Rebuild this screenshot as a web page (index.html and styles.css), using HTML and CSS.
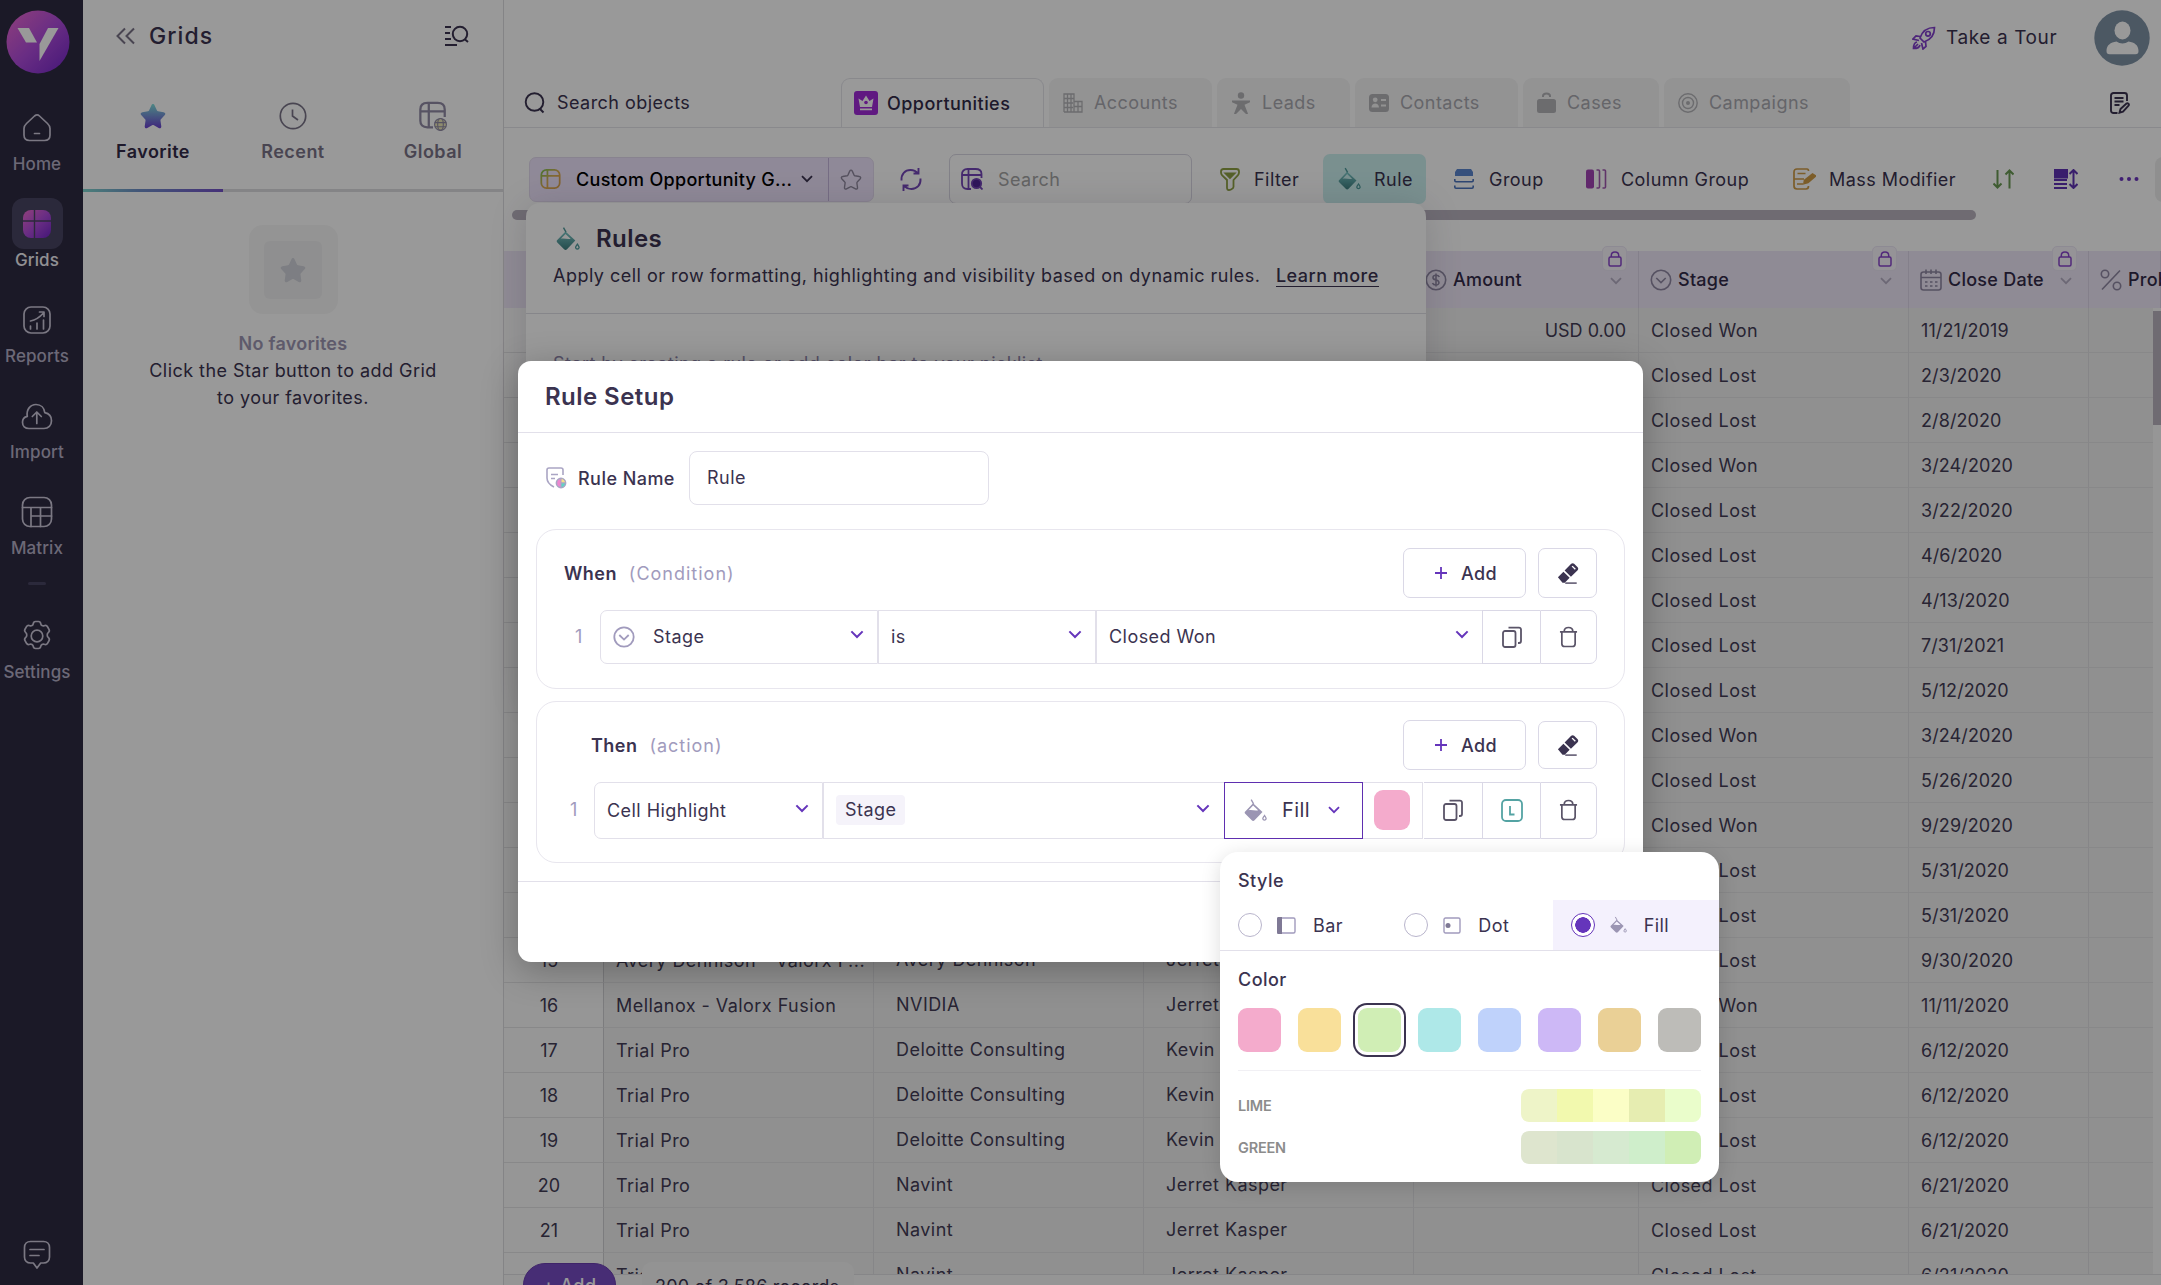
FILE: index.html
```html
<!DOCTYPE html>
<html lang="en">
<head>
    <meta charset="UTF-8">
    <meta name="viewport" content="width=device-width, initial-scale=1.0">
    <title>Grids - Rule Setup</title>
    <link rel="stylesheet" href="styles.css">
</head>
<body>
    <!-- shared icons -->
    <svg class="defs" width="0" height="0">
        <defs>
            <linearGradient id="g-brand" x1="0" y1="0" x2="1" y2="1"><stop offset="0" stop-color="#f06ad0"/><stop offset=".5" stop-color="#b04cdc"/><stop offset="1" stop-color="#7226c8"/></linearGradient>
            <linearGradient id="g-star" x1="0" y1="0" x2="0" y2="1"><stop offset="0" stop-color="#7fe0dc"/><stop offset="1" stop-color="#6a3fd0"/></linearGradient>
            <linearGradient id="g-teal" x1="0" y1="0" x2="0" y2="1"><stop offset="0" stop-color="#7cc8c8"/><stop offset="1" stop-color="#3d7f80"/></linearGradient>
            <linearGradient id="g-grid" x1="0" y1="0" x2="1" y2="1"><stop offset="0" stop-color="#7fc352"/><stop offset=".5" stop-color="#dcae58"/><stop offset="1" stop-color="#d9a04c"/></linearGradient>
        </defs>
        <symbol id="chevron" viewBox="0 0 12 8"><path d="M1 1.2l5 5 5-5" fill="none" stroke="currentColor" stroke-width="1.8"/></symbol>
        <symbol id="star" viewBox="0 0 24 24"><path d="M12 1.8c.7 0 1.1.5 1.4 1.1l2 4.3c.2.4.5.6.9.7l4.8.8c1.400.2 1.900 1.500 1 2.500l-3.300 3.500c-.3.3-.4.7-.4 1.100l.7 4.900c.2 1.300-1 2.200-2.200 1.500l-4.100-2.200c-.5-.3-1.100-.3-1.600 0l-4.100 2.200c-1.200.7-2.400-.2-2.200-1.500l.7-4.900c.1-.4-.1-.8-.4-1.100l-3.300-3.500c-.9-1-.4-2.300 1-2.500l4.800-.8c.4-.1.7-.3.9-.7l2-4.300c.3-.6.700-1.100 1.400-1.100z"/></symbol>
        <symbol id="bucket" viewBox="0 0 24 24"><path d="M.8 13.500L9.500 4.500l9.800 9-8.300 8.800c-.9.9-2 .9-2.900 0L1.300 15.500c-.6-.6-.8-1.300-.5-2z"/><path class="hollow" d="M4.800 11.800l4.700-4.900 5.200 4.800c-3.200 1.200-6.400-1-9.900.1z"/><path d="M7.500.6l2.500 4.500" fill="none" stroke="currentColor" stroke-width="1.400"/><path d="M21.400 17.200c1 1.500 1.700 2.300 1.700 3.400a1.800 1.800 0 01-3.500 0c0-1.100.8-1.900 1.800-3.400z" fill="none" stroke="currentColor" stroke-width="1.300"/></symbol>
        <symbol id="copy" viewBox="0 0 20 22"><rect x="1" y="5" width="12.500" height="16" rx="2"/><path d="M6.500 1.600h10.500a2 2 0 012 2v11.400a2 2 0 01-2 2h-1"/></symbol>
        <symbol id="trash" viewBox="0 0 20 22"><path d="M1 5.500h18M5.500 5c0-2.500 2-4 4.500-4s4.500 1.500 4.500 4M3 6v12a3 3 0 003 3h8a3 3 0 003-3V6"/></symbol>
        <symbol id="eraser" viewBox="0 0 24 24"><path d="M1 16.500l6-6 6.800 6.800-5.300 5.200H6z"/><path d="M8.300 9.200L15.500 2c1-1 2.300-1 3.200 0l3.800 3.800c.9.9.9 2.200 0 3.200l-7.300 7z"/><path d="M16.500 4.500l3.500 3.500" stroke="#fff" stroke-width="1.500"/><path d="M9 23h12.500" stroke="currentColor" stroke-width="1.400"/></symbol>
        <symbol id="lock" viewBox="0 0 14 16"><rect x="1" y="6" width="12" height="9" rx="1.500"/><path d="M3.300 6V4.500C3.300 2.400 4.800 1 7 1s3.700 1.400 3.700 3.500V6"/></symbol>
        <symbol id="picklist" viewBox="0 0 22 22"><circle cx="11" cy="11" r="9.700"/><path d="M6.300 9l4.700 4.600L15.700 9"/></symbol>
        <symbol id="grid" viewBox="0 0 24 24"><rect x="1.500" y="1.500" width="21" height="21" rx="6"/><path d="M8.500 1.500v21M1.500 8.500h21"/></symbol>
    </svg>

    <div class="app">
        <nav class="sidebar">
            <svg class="logo" width="64" height="64" viewBox="0 0 64 64"><circle cx="32" cy="32" r="31.500" fill="url(#g-brand)"/><path fill="#fff" d="M11.500 18h11.500l8 14.500h-11z"/><path fill="#fff" d="M42 18h10.500L33.500 51V34z"/></svg>
            <a class="nav-item"><span class="nav-icon"><svg width="30" height="30" viewBox="0 0 30 30"><path d="M4.500 10.500l8-7.500c1.700-1.400 3.500-1.400 5 0l8 7.500c1.500 1.400 2.500 3 2.500 5V22c0 3.600-2 5.500-5.500 5.500h-15C4 27.500 2 25.600 2 22v-6.500c0-2 1-3.600 2.500-5z"/><path d="M12.500 20.500h5"/></svg></span>Home</a>
            <a class="nav-item active"><span class="nav-icon"><svg width="28" height="28" viewBox="0 0 28 28"><rect width="28" height="28" rx="8" fill="url(#g-brand)" stroke="none"/><path d="M11.500 0v28M0 11h28" stroke="#494563" stroke-width="1.400"/></svg></span>Grids</a>
            <a class="nav-item"><span class="nav-icon"><svg width="30" height="30" viewBox="0 0 30 30"><rect x="2" y="2" width="26" height="26" rx="7"/><path d="M8.500 24v-3M15 24v-6M21.500 24V15M8.500 16c5-1 9-3.500 13-8M17.500 7h4.500v4.500"/></svg></span>Reports</a>
            <a class="nav-item"><span class="nav-icon"><svg width="32" height="30" viewBox="0 0 32 30"><path d="M8 27.500c-4 0-6.500-2.500-6.500-6.200 0-3 2-5.300 4.800-5.900C5 8.500 9.500 3.500 15 3.500c5 0 8.300 3.500 8.800 8.200 4 .8 6.700 4 6.700 8 0 4.600-3.200 7.800-7.500 7.800zM15.800 22.500V11.300M11.300 15.500l4.500-4.500 4.500 4.500"/></svg></span>Import</a>
            <a class="nav-item"><span class="nav-icon"><svg width="32" height="32" viewBox="0 0 32 32"><rect x="1.500" y="1.500" width="29" height="29" rx="7.500"/><path d="M1.500 11.500h29M10 11.500v19M19.500 11.500v19M10 20h20.500"/></svg></span>Matrix</a>
            <span class="nav-divider"></span>
            <a class="nav-item"><span class="nav-icon"><svg width="32" height="32" viewBox="0 0 32 32"><circle cx="16" cy="16" r="5.800"/><path d="M12.200 3.800c.2-1.500 1-2.300 2.300-2.300h3c1.300 0 2.100.8 2.300 2.300.3 1.600 1.800 2.500 3.300 2 1.500-.6 2.700-.3 3.400.9l1.500 2.600c.7 1.200.4 2.300-.8 3.300-1.300 1-1.300 3.800 0 4.800 1.200 1 1.500 2.100.8 3.300l-1.500 2.600c-.7 1.200-1.900 1.500-3.400.9-1.500-.5-3 .4-3.300 2-.2 1.500-1 2.300-2.300 2.300h-3c-1.300 0-2.100-.8-2.300-2.300-.3-1.600-1.800-2.500-3.300-2-1.500.6-2.700.3-3.400-.9L4 20.700c-.7-1.200-.4-2.300.8-3.300 1.300-1 1.300-3.800 0-4.800-1.200-1-1.500-2.100-.8-3.300l1.500-2.600c.7-1.200 1.900-1.500 3.400-.9 1.500.5 3-.4 3.300-2z"/></svg></span>Settings</a>
            <svg class="nav-chat" width="28" height="30" viewBox="0 0 28 30"><path d="M7.500 1.500h13c3.500 0 6 2.300 6 6v9.500c0 3.700-2.500 6-6 6h-2.800L14 28l-3.700-5H7.500c-3.500 0-6-2.300-6-6V7.500c0-3.700 2.500-6 6-6zM7 9.500h14M7 15.500h9"/></svg>
        </nav>

        <aside class="panel">
            <div class="panel-head">
                <svg class="muted" width="19" height="18" viewBox="0 0 19 18"><path d="M9 1.500L1.500 9 9 16.500M18 1.500L10.500 9l7.500 7.500"/></svg>
                <h2>Grids</h2>
                <svg class="find" width="24" height="22" viewBox="0 0 24 22"><path d="M0 2h6M0 8h5M0 14h6M0 20h12"/><circle cx="15" cy="9" r="7.200"/><path d="M19.500 14l3.500 3"/></svg>
            </div>
            <div class="panel-tabs">
                <div class="panel-tab active"><svg width="28" height="30" viewBox="0 0 24 24" fill="url(#g-star)"><use href="#star"/></svg>Favorite</div>
                <div class="panel-tab"><svg class="line" width="28" height="30" viewBox="0 0 28 28"><circle cx="14" cy="14" r="12.700"/><path d="M13.500 7.500V14l5.500 4"/></svg>Recent</div>
                <div class="panel-tab"><svg class="line thick" width="30" height="32" viewBox="0 0 30 32"><path d="M15 28H9c-5 0-7.500-2.500-7.500-7V9C1.500 4.500 4 2 9 2h11c5 0 7.500 2.500 7.500 7v8M10.500 2v26M1.500 11h26"/><g stroke-width="1.200"><circle cx="23" cy="25" r="6.300" fill="#ece8b8"/><ellipse cx="23" cy="25" rx="3" ry="6.300"/><path d="M17 23h12M17 27.500h12"/></g></svg>Global</div>
            </div>
            <div class="empty">
                <div class="empty-icon"><div><svg width="28" height="30" viewBox="0 0 24 24" fill="#d0d2da"><use href="#star"/></svg></div></div>
                <strong>No favorites</strong>
                <p>Click the Star button to add Grid<br>to your favorites.</p>
            </div>
        </aside>

        <main class="main">
            <header class="topbar">
                <svg class="rocket" width="24" height="24" viewBox="0 0 24 24"><path d="M8 12C10 6 15 1.500 22.500 1.500 22.500 9 18 14 12 16zM8.500 10.500L4 10 1 13l6 1.500M13.500 15.500l.5 5-3 2.500-1.500-6"/><circle cx="16" cy="7.800" r="2.300"/><path d="M5 16c-2.500.5-3.500 2.500-3.500 6.500 4 0 6-1 6.500-3.500M2 22l4-4"/></svg>
                <span>Take a Tour</span>
                <svg class="avatar" width="56" height="56" viewBox="0 0 56 56"><circle cx="28" cy="28" r="27.700" fill="#7f93a6"/><ellipse cx="28.500" cy="20.500" rx="8" ry="9" fill="#fff"/><path fill="#fff" d="M12.500 41c0-6 4-8.500 10-9.500 3.500 2.500 8.500 2.500 12 0 6 1 10 3.500 10 9.500 0 2.300-1 3.300-3 3.300h-26c-2 0-3-1-3-3.300z"/></svg>
            </header>

            <div class="object-tabs">
                <div class="object-search"><svg width="21" height="22" viewBox="0 0 21 22"><circle cx="10.500" cy="10" r="8.800"/><path d="M15.500 16.500l4 4"/></svg>Search objects</div>
                <div class="object-tab opportunities active"><svg width="24" height="24" viewBox="0 0 24 24"><rect width="24" height="24" rx="3" fill="#a02bd8"/><path d="M4.500 7.500L8.500 10 12 4.500l3.500 5.500 4-2.500L18 16H6zM6 17.500h12v1.800H6z" fill="#fff"/><circle cx="12" cy="11.500" r="1.800" fill="#a02bd8"/></svg>Opportunities</div>
                <div class="object-tab accounts"><svg width="20" height="20" viewBox="0 0 20 20"><g fill="none" stroke="currentColor" stroke-width="1.300"><path d="M1 19V1h10v7M1 19h10M1 5.500h10M1 10h9M1 14.500h9M4.500 1v18M8 1v18M11 8.500h8V19h-8zM11 13.500h8M15 8.500V19"/></g></svg>Accounts</div>
                <div class="object-tab leads"><svg width="20" height="22" viewBox="0 0 20 22"><circle cx="10" cy="3.500" r="3.200"/><path d="M1 8.500h18v1.800l-5.500 2.500 3.500 9-1.500.7L10 17l-5.500 5.500L3 21.800l3.500-9L1 10.300z"/></svg>Leads</div>
                <div class="object-tab contacts"><svg width="20" height="18" viewBox="0 0 20 18"><rect width="20" height="18" rx="3.500"/><g fill="#f3f3f3"><circle cx="6.200" cy="5.800" r="2.400"/><path d="M2.500 13.500c0-5.500 7.500-5.500 7.500 0zM12 5h5v2h-5zM12 10.500h5v2h-5z"/></g></svg>Contacts</div>
                <div class="object-tab cases"><svg width="19" height="21" viewBox="0 0 19 21"><rect y="7" width="19" height="14" rx="2.500"/><path d="M6 5V4c0-1.500 1.200-2.500 3.500-2.500S13 2.500 13 4v1" fill="none" stroke="currentColor" stroke-width="2"/></svg>Cases</div>
                <div class="object-tab campaigns"><svg width="20" height="20" viewBox="0 0 20 20"><g fill="none" stroke="currentColor" stroke-width="1.400"><circle cx="10" cy="10" r="9.200"/><circle cx="10" cy="10" r="5.500"/></g><circle cx="10" cy="10" r="2"/></svg>Campaigns</div>
                <svg class="note" width="20" height="22" viewBox="0 0 20 22"><path d="M7.500 21H3.500C2 21 1 20 1 18.500V3.500C1 2 2 1 3.500 1h11C16 1 17 2 17 3.500V9M4.500 6h9M4.500 9.500h9M4.500 13h5M10.500 17l6-5.500c1.200-.8 3.200.7 2 2.200l-5.500 6-3.500 1z"/></svg>
            </div>

            <div class="toolbar">
                <div class="grid-picker">
                    <svg width="21" height="22" viewBox="0 0 24 24" fill="none" stroke="url(#g-grid)" stroke-width="2"><use href="#grid"/></svg>
                    <span class="picker-name">Custom Opportunity G...</span>
                    <svg width="12" height="8"><use href="#chevron"/></svg>
                    <span class="picker-star"><svg width="22" height="23" viewBox="0 0 24 24" fill="none" stroke="#8f889e" stroke-width="1.500"><use href="#star"/></svg></span>
                </div>
                <svg class="refresh" width="22" height="23" viewBox="0 0 22 23"><path d="M1.500 12.500C1 6 5 2 10.500 2c3 0 5.500 1 7.500 3.500M18.500 0v5.500h-5M20.500 10.500C21 17 17 21 11.500 21c-3 0-5.500-1-7.500-3.500M3.500 23v-5.500h5"/></svg>
                <div class="grid-search"><svg width="22" height="22" viewBox="0 0 22 22" fill="none" stroke="#7446b8" stroke-width="1.800"><path d="M10 21H6.500C3 21 1 19 1 15.500v-9C1 3 3 1 6.500 1h8C18.500 1 20.500 3 20.500 6v4M1 7h19.500M7.500 1v20"/><circle cx="15.500" cy="15.500" r="4.700" fill="#4f2496"/><path d="M19 19l2.500 2.500"/></svg>Search</div>
                <div class="tool filter"><svg width="20" height="23" viewBox="0 0 20 23" fill="none" stroke="#8ea044" stroke-width="1.800"><path d="M3.500 1h13C18.200 1 19 2 19 3.500v1c0 1-.5 2-1.200 2.800L13.500 12v7c0 1.800-4.500 4-6 2.500-.6-.6-.5-1.500-.5-2.500v-7L2.200 7.300C1.500 6.500 1 5.500 1 4.500v-1C1 2 1.800 1 3.500 1z"/><path d="M5.500 5.500h9L10 10z" fill="#8ea044"/></svg>Filter</div>
                <div class="tool rule"><svg class="teal" width="23" height="24"><use href="#bucket"/></svg>Rule</div>
                <div class="tool group"><svg width="20" height="22" viewBox="0 0 20 22"><path d="M3 1h14l2 3v4H1V4z" fill="#5b86cf"/><path d="M.8 11v1.500c0 .8.500 1.200 1.200 1.200h16c.7 0 1.200-.4 1.200-1.200V11M.8 17.500V19c0 .8.500 1.200 1.200 1.200h16c.7 0 1.200-.4 1.200-1.200v-1.500" fill="none" stroke="#4b74bd" stroke-width="1.600"/></svg>Group</div>
                <div class="tool column"><svg width="21" height="20" viewBox="0 0 21 20"><rect width="8" height="19" y=".5" rx="2" fill="#a244b4"/><path d="M10.500 1h2c.8 0 1 .4 1 1v16c0 .6-.2 1-1 1h-2M16.500 1h2c.8 0 1 .4 1 1v16c0 .6-.2 1-1 1h-2" fill="none" stroke="#a058b0" stroke-width="1.600"/></svg>Column Group</div>
                <div class="tool mass"><svg width="23" height="22" viewBox="0 0 23 22" fill="none" stroke="#cf9b45" stroke-width="1.700"><path d="M14 1H4C2 1 1 2 1 4v14c0 2 1 3 3 3h9c1.500 0 2.500-1 2.500-3M14 1c1 0 1.500.7 1.500 2M4.500 5.500h8M1 11h10M4 16h6"/><path d="M11.500 12.500L19.500 6l3 2-7.500 6.500-4 1z" fill="#cf9b45"/></svg>Mass Modifier</div>
                <svg class="sort" width="21" height="20" viewBox="0 0 21 20"><path d="M4.500 1v18M.5 14.500l4 4 4-4M16.500 19.500V1.500M12.500 5.500l4-4 4 4"/></svg>
                <svg class="height" width="24" height="20" viewBox="0 0 24 20"><path d="M0 1h13v7.500H0z" fill="#5f33b4"/><path d="M0 11h13M0 15h13M0 19h13M19.500 1.500v17M15.500 5l4-4 4 4M15.500 15l4 4 4-4"/></svg>
                <svg class="dots" width="20" height="6" viewBox="0 0 20 6"><circle cx="2.500" cy="3" r="2"/><circle cx="10" cy="3" r="2"/><circle cx="17.500" cy="3" r="2"/></svg>
                <span class="cut-button"></span>
            </div>
            <div class="h-scroll"><span></span></div>

            <div class="table">
                <div class="table-head">
                    <div class="th"></div>
                    <div class="th"></div>
                    <div class="th"></div>
                    <div class="th"></div>
                    <div class="th"><svg class="th-icon" width="22" height="22" viewBox="0 0 22 22"><circle cx="11" cy="11" r="9.700"/><path d="M14.300 8c-.5-1.200-1.700-1.800-3.300-1.800-3.800 0-4 4-.5 4.600 4.500.6 4.500 5.200.5 5.200-1.800 0-3-.7-3.500-2M11 4.500v13"/></svg>Amount<span class="lock"><svg width="14" height="16"><use href="#lock"/></svg></span><svg class="th-more" width="12" height="8"><use href="#chevron"/></svg></div>
                    <div class="th"><svg class="th-icon" width="22" height="22"><use href="#picklist"/></svg>Stage<span class="lock"><svg width="14" height="16"><use href="#lock"/></svg></span><svg class="th-more" width="12" height="8"><use href="#chevron"/></svg></div>
                    <div class="th"><svg class="th-icon" width="22" height="22" viewBox="0 0 22 22"><rect x="1" y="3" width="20" height="18" rx="2.500"/><path d="M1 8.500h20M6 .5V5M11 .5V5M16 .5V5"/><path d="M5 13h12.500M5 17h12.500" stroke-dasharray="2.500 2.500"/></svg>Close Date<span class="lock"><svg width="14" height="16"><use href="#lock"/></svg></span><svg class="th-more" width="12" height="8"><use href="#chevron"/></svg></div>
                    <div class="th"><svg class="th-icon" width="22" height="22" viewBox="0 0 22 22"><circle cx="5" cy="5" r="3.700"/><circle cx="17" cy="17" r="3.700"/><path d="M20 1.500L2 20.500"/></svg>Probability</div>
                </div>
                <div class="table-body" id="table-body"></div>
                <div class="v-scroll"><span></span></div>
            </div>

            <footer class="records">
                <button class="add-record">+ Add</button>
                <span class="record-count">200 of 3,586 records</span>
            </footer>
        </main>
    </div>

    <section class="rules-panel">
        <div class="rules-head">
            <h3><svg class="teal" width="24" height="24"><use href="#bucket"/></svg>Rules</h3>
            <p>Apply cell or row formatting, highlighting and visibility based on dynamic rules. <a>Learn more</a></p>
        </div>
        <p class="rules-hint">Start by creating a rule or add color bar to your picklist.</p>
    </section>

    <div class="overlay"></div>

    <section class="modal">
        <h3 class="modal-title">Rule Setup</h3>
        <div class="modal-body">
            <div class="rule-name">
                <svg width="21" height="22" viewBox="0 0 21 22" fill="none" stroke="#aaa5c4" stroke-width="1.600"><path d="M8 20C4 18 1 15.500 1 11V3c0-1.300.7-2 2-2h12c1.300 0 2 .7 2 2v5M5 7.500h7M5 11.500h4"/><circle cx="15" cy="16" r="4.600" fill="#ee86cf"/><path d="M15 11.500a4.500 4.500 0 014.500 4.500H15z" fill="#f5e08a" stroke-width="1"/><path d="M15 16h4.500a4.500 4.500 0 01-4.500 4.500z" fill="#5fd3c4" stroke-width="1"/></svg>
                <label>Rule Name</label>
                <div class="text-input">Rule</div>
            </div>

            <div class="block">
                <div class="block-head">
                    <strong>When</strong><em>(Condition)</em>
                    <button class="add-btn"><svg width="12" height="12" viewBox="0 0 12 12"><path d="M6 0v12M0 6h12"/></svg>Add</button>
                    <button class="icon-btn"><svg width="22" height="24"><use href="#eraser"/></svg></button>
                </div>
                <div class="block-row when-row">
                    <span class="row-no">1</span>
                    <div class="cell field"><svg class="pick" width="22" height="22"><use href="#picklist"/></svg>Stage<svg class="chev" width="14" height="9"><use href="#chevron"/></svg></div>
                    <div class="cell operator">is<svg class="chev" width="14" height="9"><use href="#chevron"/></svg></div>
                    <div class="cell value">Closed Won<svg class="chev" width="14" height="9"><use href="#chevron"/></svg></div>
                    <div class="cell act"><svg width="20" height="22"><use href="#copy"/></svg></div>
                    <div class="cell act last"><svg width="19" height="22"><use href="#trash"/></svg></div>
                </div>
            </div>

            <div class="block then">
                <div class="block-head">
                    <strong>Then</strong><em>(action)</em>
                    <button class="add-btn"><svg width="12" height="12" viewBox="0 0 12 12"><path d="M6 0v12M0 6h12"/></svg>Add</button>
                    <button class="icon-btn small"><svg width="22" height="24"><use href="#eraser"/></svg></button>
                </div>
                <div class="block-row then-row">
                    <span class="row-no">1</span>
                    <div class="cell action">Cell Highlight<svg class="chev" width="14" height="9"><use href="#chevron"/></svg></div>
                    <div class="cell target"><span class="chip">Stage</span><svg class="chev" width="14" height="9"><use href="#chevron"/></svg></div>
                    <div class="cell fill"><svg class="grey-bucket" width="23" height="25"><use href="#bucket"/></svg>Fill<svg class="fill-chev" width="12" height="8"><use href="#chevron"/></svg></div>
                    <div class="cell swatch-cell"><span></span></div>
                    <div class="cell act"><svg width="20" height="22"><use href="#copy"/></svg></div>
                    <div class="cell act"><svg class="legend" width="22" height="23" viewBox="0 0 22 23"><rect x="1" y="1" width="20" height="21" rx="4"/><path d="M9 7v8.500h4.500"/></svg></div>
                    <div class="cell act last"><svg width="19" height="22"><use href="#trash"/></svg></div>
                </div>
            </div>
        </div>
        <div class="modal-foot"></div>
    </section>

    <section class="popover">
        <h4>Style</h4>
        <div class="styles">
            <label><i></i><svg width="19" height="17" viewBox="0 0 19 17"><rect x="1" y="1" width="17" height="15" rx="1.500"/><path d="M0 1.500C0 .5.500 0 1.500 0H5v17H1.500C.5 17 0 16.500 0 15.500z" fill="#7f7995" stroke="none"/></svg>Bar</label>
            <label><i></i><svg width="18" height="17" viewBox="0 0 18 17"><rect x="1" y="1" width="16" height="15" rx="1.500"/><circle cx="5" cy="8.500" r="2.500" fill="#7f7995" stroke="none"/></svg>Dot</label>
            <label class="checked"><i></i><svg class="grey-bucket" width="17" height="18"><use href="#bucket"/></svg>Fill</label>
        </div>
        <h4>Color</h4>
        <div class="swatches">
            <span class="pink"></span><span class="yellow"></span><span class="green selected"></span><span class="aqua"></span><span class="blue"></span><span class="violet"></span><span class="sand"></span><span class="grey"></span>
        </div>
        <div class="shade"><b>LIME</b><div class="ramp lime"><i></i><i></i><i></i><i></i><i></i></div></div>
        <div class="shade"><b>GREEN</b><div class="ramp leaf"><i></i><i></i><i></i><i></i><i></i></div></div>
    </section>

    <script>
        // name, account, owner, amount, stage, close date
        const rows = [
            ['', '', '', 'USD 0.00', 'Closed Won', '11/21/2019'],
            ['', '', '', '', 'Closed Lost', '2/3/2020'],
            ['', '', '', '', 'Closed Lost', '2/8/2020'],
            ['', '', '', '', 'Closed Won', '3/24/2020'],
            ['', '', '', '', 'Closed Lost', '3/22/2020'],
            ['', '', '', '', 'Closed Lost', '4/6/2020'],
            ['', '', '', '', 'Closed Lost', '4/13/2020'],
            ['', '', '', '', 'Closed Lost', '7/31/2021'],
            ['', '', '', '', 'Closed Lost', '5/12/2020'],
            ['', '', '', '', 'Closed Won', '3/24/2020'],
            ['', '', '', '', 'Closed Lost', '5/26/2020'],
            ['', '', '', '', 'Closed Won', '9/29/2020'],
            ['', '', '', '', 'Closed Lost', '5/31/2020'],
            ['', '', '', '', 'Closed Lost', '5/31/2020'],
            ['Avery Dennison - Valorx F...', 'Avery Dennison', 'Jerret Kasper', '', 'Closed Lost', '9/30/2020'],
            ['Mellanox - Valorx Fusion', 'NVIDIA', 'Jerret Kasper', '', 'Closed Won', '11/11/2020'],
            ['Trial Pro', 'Deloitte Consulting', 'Kevin S', '', 'Closed Lost', '6/12/2020'],
            ['Trial Pro', 'Deloitte Consulting', 'Kevin S', '', 'Closed Lost', '6/12/2020'],
            ['Trial Pro', 'Deloitte Consulting', 'Kevin S', '', 'Closed Lost', '6/12/2020'],
            ['Trial Pro', 'Navint', 'Jerret Kasper', '', 'Closed Lost', '6/21/2020'],
            ['Trial Pro', 'Navint', 'Jerret Kasper', '', 'Closed Lost', '6/21/2020'],
            ['Trial Pro', 'Navint', 'Jerret Kasper', '', 'Closed Lost', '6/21/2020']
        ];

        const body = document.getElementById('table-body');
        rows.forEach((row, i) => {
            const tr = document.createElement('div');
            tr.className = 'tr';
            [i + 1, ...row, ''].forEach(value => {
                const td = document.createElement('div');
                td.className = 'td';
                td.textContent = value;
                tr.appendChild(td);
            });
            body.appendChild(tr);
        });
    </script>
</body>
</html>
```

FILE: styles.css
```css
* {
    margin: 0;
    padding: 0;
    box-sizing: border-box;
}

body {
    font-family: Inter, "Open Sans", sans-serif;
    font-size: 18px;
    letter-spacing: 0.45px;
    color: #3b3350;
    background: #fff;
    width: 2161px;
    height: 1285px;
    overflow: hidden;
    position: relative;
}

button {
    font: inherit;
    letter-spacing: inherit;
    color: inherit;
    background: #fff;
}

svg {
    flex: none;
    display: block;
}

.defs {
    position: absolute;
}

.app {
    display: flex;
    height: 1285px;
    overflow: hidden;
}

/* sidebar */
.sidebar {
    width: 83px;
    background: #2d2a41;
    display: flex;
    flex-direction: column;
    align-items: center;
    padding: 10px 9px 15px 0;
}

.logo {
    margin: 0 0 28px 2px;
}

.nav-item {
    display: flex;
    flex-direction: column;
    align-items: center;
    height: 75px;
    margin-bottom: 21px;
    font-size: 17px;
    font-weight: 500;
    letter-spacing: 0.1px;
    line-height: 23px;
    color: #b5afc6;
}

.nav-icon {
    width: 51px;
    height: 51px;
    flex: none;
    border-radius: 12px;
    display: flex;
    align-items: center;
    justify-content: center;
}

.nav-icon svg,
.nav-chat {
    fill: none;
    stroke: #cdc8da;
    stroke-width: 1.7;
    stroke-linecap: round;
    stroke-linejoin: round;
}

.nav-item.active {
    color: #f2f0f6;
}

.nav-item.active .nav-icon {
    background: #494563;
}

.nav-divider {
    width: 18px;
    height: 3px;
    border-radius: 2px;
    background: #494563;
    margin-bottom: 25px;
}

.nav-chat {
    margin-top: auto;
}

/* favorites panel */
.panel {
    width: 421px;
    border-right: 1px solid #dcdce0;
}

.panel-head {
    height: 72px;
    display: flex;
    align-items: center;
    padding: 0 34px 0 33px;
}

.panel-head svg {
    fill: none;
    stroke: #3b3350;
    stroke-width: 2;
}

.panel-head .muted {
    stroke: #7a7488;
}

.panel-head h2 {
    font-size: 23px;
    font-weight: 500;
    margin-left: 14px;
    letter-spacing: 1.1px;
}

.panel-head .find {
    margin-left: auto;
}

.panel-tabs {
    display: flex;
    height: 120px;
    border-bottom: 3px solid #dcdce0;
}

.panel-tab {
    flex: 1;
    display: flex;
    flex-direction: column;
    align-items: center;
    padding-top: 29px;
    font-weight: 600;
    line-height: 22px;
    color: #7a7488;
}

.panel-tab svg {
    margin-bottom: 10px;
    height: 30px;
}

.panel-tab .line {
    fill: none;
    stroke: #7a7488;
    stroke-width: 1.7;
}

.panel-tab .thick {
    stroke: #918ba6;
    stroke-width: 2.4;
}

.panel-tab.active {
    color: #332b49;
    border-bottom: 3px solid;
    border-image: linear-gradient(90deg, #7fd6cc, #6f8fc8 40%, #7450c8) 1;
    margin-bottom: -3px;
}

.empty {
    display: flex;
    flex-direction: column;
    align-items: center;
    padding-top: 33px;
    text-align: center;
    line-height: 27px;
}

.empty-icon {
    width: 89px;
    height: 89px;
    border-radius: 14px;
    background: #f7f7f7;
    display: flex;
    align-items: center;
    justify-content: center;
    margin-bottom: 16px;
}

.empty-icon div {
    width: 58px;
    height: 58px;
    border-radius: 6px;
    background: #efeff0;
    display: flex;
    align-items: center;
    justify-content: center;
}

.empty strong {
    font-weight: 600;
    letter-spacing: 0.25px;
    color: #9d97b3;
}

/* main */
.main {
    flex: 1;
    min-width: 0;
    display: flex;
    flex-direction: column;
}

.main > * {
    flex: none;
}

.topbar {
    height: 75px;
    display: flex;
    align-items: center;
    justify-content: flex-end;
    padding-right: 11px;
    font-size: 19px;
    letter-spacing: 0.6px;
}

.topbar span {
    width: 114px;
    white-space: nowrap;
    margin: 0 34px 0 10px;
}

.rocket {
    fill: none;
    stroke: #8240cc;
    stroke-width: 1.7;
}

.object-tabs {
    height: 53px;
    padding-top: 3px;
    display: flex;
    border-bottom: 1px solid #e4e4ea;
}

.object-search {
    width: 337px;
    display: flex;
    align-items: center;
    gap: 12px;
    padding-left: 20px;
}

.object-search svg,
.note {
    fill: none;
    stroke: #3b3350;
    stroke-width: 1.9;
}

.object-tab {
    display: flex;
    align-items: center;
    gap: 11px;
    padding-left: 14px;
    margin-right: 5px;
    border-radius: 9px 9px 0 0;
    background: #f5f5f6;
    color: #a9a9b0;
    fill: #b4b4b8;
}

.object-tab svg {
    color: #b4b4b8;
}

.object-tab.active {
    background: #fff;
    border: 1px solid #e4e4ea;
    border-bottom: 0;
    color: #332b49;
    font-weight: 500;
    gap: 9px;
    padding-left: 12px;
}

.opportunities { width: 203px; }
.accounts { width: 163px; }
.leads { width: 133px; }
.contacts { width: 163px; }
.cases { width: 136px; }
.campaigns { width: 186px; }

.note {
    margin: 14px 31px 0 auto;
}

.toolbar {
    height: 82px;
    display: flex;
    align-items: center;
    padding: 20px 0 0 25px;
}

.toolbar > * {
    flex: none;
}

.grid-picker {
    width: 345px;
    height: 45px;
    border-radius: 7px;
    background: #efe5fd;
    border: 1px solid #e3daef;
    display: flex;
    align-items: center;
    padding-left: 10px;
    color: #3b3350;
}

.picker-name {
    width: 216px;
    margin: 0 9px 0 15px;
    white-space: nowrap;
    font-weight: 500;
    letter-spacing: 0.3px;
    color: #000;
}

.picker-star {
    margin-left: auto;
    width: 45px;
    height: 43px;
    border-left: 1px solid #c5b6dc;
    display: flex;
    align-items: center;
    justify-content: center;
}

.refresh {
    margin: 0 27px 0 26px;
    fill: none;
    stroke: #7446b8;
    stroke-width: 1.9;
}

.grid-search {
    width: 243px;
    height: 50px;
    border: 1px solid #d9d7e3;
    border-radius: 7px;
    display: flex;
    align-items: center;
    gap: 15px;
    padding-left: 11px;
    margin-right: 16px;
    color: #a5a5a5;
}

.tool {
    height: 50px;
    display: flex;
    align-items: center;
    gap: 14px;
    padding-left: 15px;
    white-space: nowrap;
}

.filter {
    width: 115px;
    padding-left: 12px;
}

.rule {
    width: 103px;
    border-radius: 7px;
    background: #cbf0ef;
}

.rule.tool {
    gap: 13px;
}

.group {
    width: 145px;
    padding-left: 28px;
    gap: 15px;
}

.column {
    width: 207px;
}

.mass {
    width: 201px;
    gap: 13px;
}

.teal {
    fill: url(#g-teal);
    color: #4f9a9b;
}

.teal,
.grey-bucket {
    --hollow: #fff;
}

.hollow {
    fill: var(--hollow);
}

.rule .teal {
    --hollow: #cbf0ef;
}

.grey-bucket {
    fill: #9b95b3;
    color: #9b95b3;
    stroke: none;
}

.sort,
.height {
    fill: none;
    stroke: #6a9a54;
    stroke-width: 2;
    margin-left: 14px;
}

.height {
    stroke: #5f33b4;
    margin-left: 40px;
}

.dots {
    fill: #6b35c0;
    margin: 0 16px 0 41px;
}

.cut-button {
    width: 20px;
    height: 45px;
    border-radius: 8px;
    background: #eee;
}

.h-scroll {
    height: 41px;
    padding-left: 8px;
}

.h-scroll span {
    display: block;
    width: 1464px;
    height: 10px;
    border-radius: 5px;
    background: #b9b3bf;
}

/* table */
.table {
    position: relative;
    height: 1028px;
    overflow: hidden;
    margin-top: -5px;
    padding-top: 5px;
}

.table-head,
.tr {
    display: grid;
    grid-template-columns: 100px 270px 270px 270px 225px 270px 180px 72px;
}

.table-head {
    height: 57px;
    background: #efe8f8;
}

.th {
    position: relative;
    display: flex;
    align-items: center;
    gap: 6px;
    padding-left: 11px;
    border-right: 1px solid #ddd5e8;
    font-weight: 500;
    letter-spacing: 0.25px;
    color: #332b49;
    white-space: nowrap;
}

.th-icon {
    fill: none;
    stroke: #8f88a3;
    stroke-width: 1.6;
}

.lock {
    position: absolute;
    right: 11px;
    top: -5px;
    width: 25px;
    height: 25px;
    border-radius: 5px;
    background: #f8f5fc;
    border: 1px solid #ece6f5;
    display: flex;
    align-items: center;
    justify-content: center;
}

.lock svg {
    fill: none;
    stroke: #8844cc;
    stroke-width: 1.5;
}

.th-more {
    position: absolute;
    right: 16px;
    top: 26px;
    color: #b5aec4;
}

.tr {
    height: 45px;
}

.td {
    padding-left: 12px;
    line-height: 45px;
    border-right: 1px solid #e0e0e3;
    border-bottom: 1px solid #e3e3e5;
    background: #f1f1f1;
    color: #433c56;
    white-space: nowrap;
    overflow: hidden;
}

.td:first-child {
    padding: 0 9px 0 0;
    text-align: center;
    letter-spacing: 0;
    background: #fbfbfb;
    border-right-color: #cfcfd3;
}

.td:nth-child(3),
.td:nth-child(4) {
    padding-left: 22px;
    line-height: 43px;
}

.td:nth-child(5) {
    padding: 0 12px 0 0;
    text-align: right;
    letter-spacing: 0;
}

.td:nth-child(7) {
    letter-spacing: 0.1px;
}

.v-scroll {
    position: absolute;
    right: 0;
    top: 62px;
    width: 8px;
    height: 966px;
    padding-top: 3px;
    background: #fbfbfb;
}

.v-scroll span {
    display: block;
    height: 114px;
    background: #b9b3bf;
}

.records {
    height: 60px;
    border-top: 1px solid #e0e0e3;
    background: #f8f8f8;
    display: flex;
    align-items: flex-start;
    position: relative;
}

.add-record {
    width: 93px;
    height: 45px;
    margin: -12px 0 0 19px;
    border: 1px solid #6a3db0;
    border-radius: 22px;
    background: #774bc4;
    color: #fff;
    font-weight: 500;
}

.record-count {
    width: 212px;
    height: 50px;
    line-height: 50px;
    margin: -13px 0 0 26px;
    padding-left: 13px;
    border-radius: 10px;
    background: #f5f5f5;
    letter-spacing: 0.2px;
    white-space: nowrap;
}

/* rules panel under the dialog */
.rules-panel {
    position: absolute;
    left: 526px;
    top: 203px;
    width: 900px;
    height: 500px;
    border-radius: 14px;
    background: #fff;
    box-shadow: 0 4px 36px rgba(60, 50, 80, 0.18);
}

.rules-head {
    height: 111px;
    padding: 21px 0 0 27px;
    border-bottom: 1px solid #e0e0e6;
}

.rules-head h3 {
    display: flex;
    align-items: center;
    gap: 16px;
    padding-left: 3px;
    font-size: 24px;
    font-weight: 600;
    line-height: 30px;
}

.rules-head p {
    line-height: 26px;
    margin-top: 9px;
    letter-spacing: 0.48px;
    white-space: nowrap;
}

.rules-head a {
    margin-left: 10px;
    font-weight: 500;
    border-bottom: 1px solid #3b3350;
}

.rules-hint {
    padding: 39px 0 0 27px;
    color: #8f86ac;
    white-space: nowrap;
}

.overlay {
    position: absolute;
    inset: 0;
    background: rgba(0, 0, 0, 0.4);
}

/* dialog */
.modal {
    position: absolute;
    left: 518px;
    top: 361px;
    width: 1125px;
    height: 601px;
    border-radius: 13px;
    background: #fff;
    box-shadow: 0 8px 36px rgba(0, 0, 0, 0.28);
}

.modal-title {
    height: 72px;
    padding-left: 27px;
    font-size: 24px;
    font-weight: 600;
    line-height: 71px;
    border-bottom: 1px solid #e2e0ea;
}

.modal-body {
    height: 449px;
    padding: 18px 18px 0;
    border-bottom: 1px solid #e2e0ea;
}

.rule-name {
    display: flex;
    align-items: center;
    padding-left: 10px;
    margin-bottom: 24px;
}

.rule-name label {
    width: 111px;
    margin-left: 11px;
    font-weight: 500;
    white-space: nowrap;
}

.text-input {
    width: 300px;
    height: 54px;
    padding-left: 17px;
    line-height: 52px;
    border: 1px solid #e2e0ea;
    border-radius: 8px;
}

.block {
    height: 160px;
    margin-bottom: 12px;
    padding: 18px 27px 0;
    border: 1px solid #e8e6ee;
    border-radius: 20px;
}

.block.then {
    height: 162px;
}

.block-head {
    height: 50px;
    display: flex;
    align-items: center;
}

.then .block-head {
    padding-left: 27px;
}

.block-head strong {
    font-weight: 600;
}

.block-head em {
    font-style: normal;
    color: #a19bbd;
    margin-left: 12px;
    letter-spacing: 1px;
}

.add-btn,
.icon-btn {
    height: 50px;
    border: 1px solid #dad8e6;
    border-radius: 7px;
    display: flex;
    align-items: center;
    justify-content: center;
}

.add-btn {
    width: 123px;
    gap: 14px;
    margin: 0 12px 0 auto;
    font-weight: 500;
    padding-left: 3px;
}

.add-btn svg {
    stroke: #6535bb;
    stroke-width: 1.8;
}

.icon-btn {
    width: 59px;
    fill: #3b3350;
}

.icon-btn.small {
    height: 48px;
}

.block-row {
    display: flex;
    margin-top: 12px;
    height: 54px;
}

.then-row {
    height: 57px;
}

.row-no {
    width: 36px;
    line-height: 53px;
    padding-left: 11px;
    color: #a19bbd;
    flex: none;
}

.then-row .row-no {
    width: 30px;
    padding-left: 6px;
    line-height: 55px;
}

.cell {
    display: flex;
    align-items: center;
    border: 1px solid #e2e0ea;
    border-right-width: 0;
    padding: 0 0 1px 12px;
    position: relative;
}

.row-no + .cell {
    border-radius: 7px 0 0 7px;
}

.chev {
    margin: 0 13px 4px auto;
    color: #6535bb;
}

.field {
    width: 278px;
    border-right-width: 1px;
}

.pick {
    margin-right: 18px;
    fill: none;
    stroke: #a19bbd;
    stroke-width: 1.8;
}

.operator {
    width: 218px;
    border-right-width: 1px;
}

.value {
    flex: 1;
}

.act {
    width: 58px;
    padding: 0 0 1px;
    justify-content: center;
    fill: none;
    stroke: #5a5468;
    stroke-width: 1.8;
    border-color: #dad8e6;
}

.act.last {
    width: 57px;
    border-right-width: 1px;
    border-radius: 0 7px 7px 0;
}

.action {
    width: 229px;
    border-right-width: 1px;
}

.target {
    flex: 1;
}

.target .chev {
    margin-right: 14px;
}

.chip {
    height: 30px;
    padding: 0 9px;
    line-height: 30px;
    border-radius: 4px;
    background: #f5f3fa;
}

.fill {
    width: 139px;
    padding-left: 19px;
    border: 1px solid #5f2fb0;
    font-size: 20px;
}

.fill .grey-bucket {
    margin-right: 15px;
}

.fill-chev {
    margin: 0 22px 0 auto;
    color: #6535bb;
}

.swatch-cell {
    width: 60px;
    padding-left: 11px;
    border-left: 0;
    border-right-width: 1px;
}

.swatch-cell span {
    width: 36px;
    height: 40px;
    border-radius: 9px;
    background: #f4abcc;
}

.swatch-cell + .act {
    border-left: 0;
    margin-left: 1px;
}

.legend {
    stroke: #54a3a3;
}

/* style and color picker */
.popover {
    position: absolute;
    left: 1220px;
    top: 852px;
    width: 499px;
    height: 330px;
    border-radius: 18px;
    background: #fff;
    box-shadow: 0 4px 20px rgba(0, 0, 0, 0.14);
}

.popover h4 {
    height: 48px;
    padding-left: 18px;
    font-size: 18px;
    font-weight: 500;
    line-height: 58px;
}

.styles {
    display: flex;
    height: 51px;
    border-bottom: 1px solid #e2e0ea;
}

.styles label {
    flex: 1;
    display: flex;
    align-items: center;
    padding-left: 18px;
}

.styles i {
    width: 24px;
    height: 24px;
    margin-right: 15px;
    border: 1px solid #b9b5cc;
    border-radius: 50%;
}

.styles svg {
    margin-right: 17px;
    fill: none;
    stroke: #a19bbd;
    stroke-width: 1.4;
}

.styles .grey-bucket {
    fill: #9b95b3;
    stroke: none;
    --hollow: #f4f1fd;
}

.styles .checked {
    background: #f4f1fd;
}

.checked i {
    border-color: #6535bb;
    background: radial-gradient(circle, #6535bb 7.5px, #fff 8px);
}

.swatches {
    display: flex;
    justify-content: space-between;
    margin: 9px 18px 0;
    height: 63px;
    border-bottom: 1px solid #f1f0f4;
}

.swatches span {
    width: 43px;
    height: 44px;
    border-radius: 9px;
}

.swatches .selected {
    box-shadow: 0 0 0 3px #fff, 0 0 0 5px #3b3350;
}

.pink { background: #f4abcc; }
.yellow { background: #f9e09a; }
.green { background: #d0eeb5; }
.aqua { background: #aee8e8; }
.blue { background: #bfd2fb; }
.violet { background: #cdb8f6; }
.sand { background: #ead096; }
.grey { background: #bdbcb8; }

.shade {
    display: flex;
    justify-content: space-between;
    align-items: center;
    height: 33px;
    margin: 18px 18px 0;
}

.shade + .shade {
    margin-top: 9px;
}

.shade b {
    font-size: 14.5px;
    font-weight: 600;
    letter-spacing: -0.2px;
    color: #8c8c8c;
}

.ramp {
    width: 180px;
    height: 33px;
    display: flex;
    border-radius: 8px;
    overflow: hidden;
}

.ramp i {
    flex: 1;
}

.lime i:nth-child(1) { background: #eef4c8; }
.lime i:nth-child(2) { background: #f2f9ae; }
.lime i:nth-child(3) { background: #fbfec6; }
.lime i:nth-child(4) { background: #e6edb1; }
.lime i:nth-child(5) { background: #eafdcb; }
.leaf i:nth-child(1) { background: #dee5ce; }
.leaf i:nth-child(2) { background: #d8e4cd; }
.leaf i:nth-child(3) { background: #d6ead0; }
.leaf i:nth-child(4) { background: #cfeecb; }
.leaf i:nth-child(5) { background: #d0eeb5; }
```
